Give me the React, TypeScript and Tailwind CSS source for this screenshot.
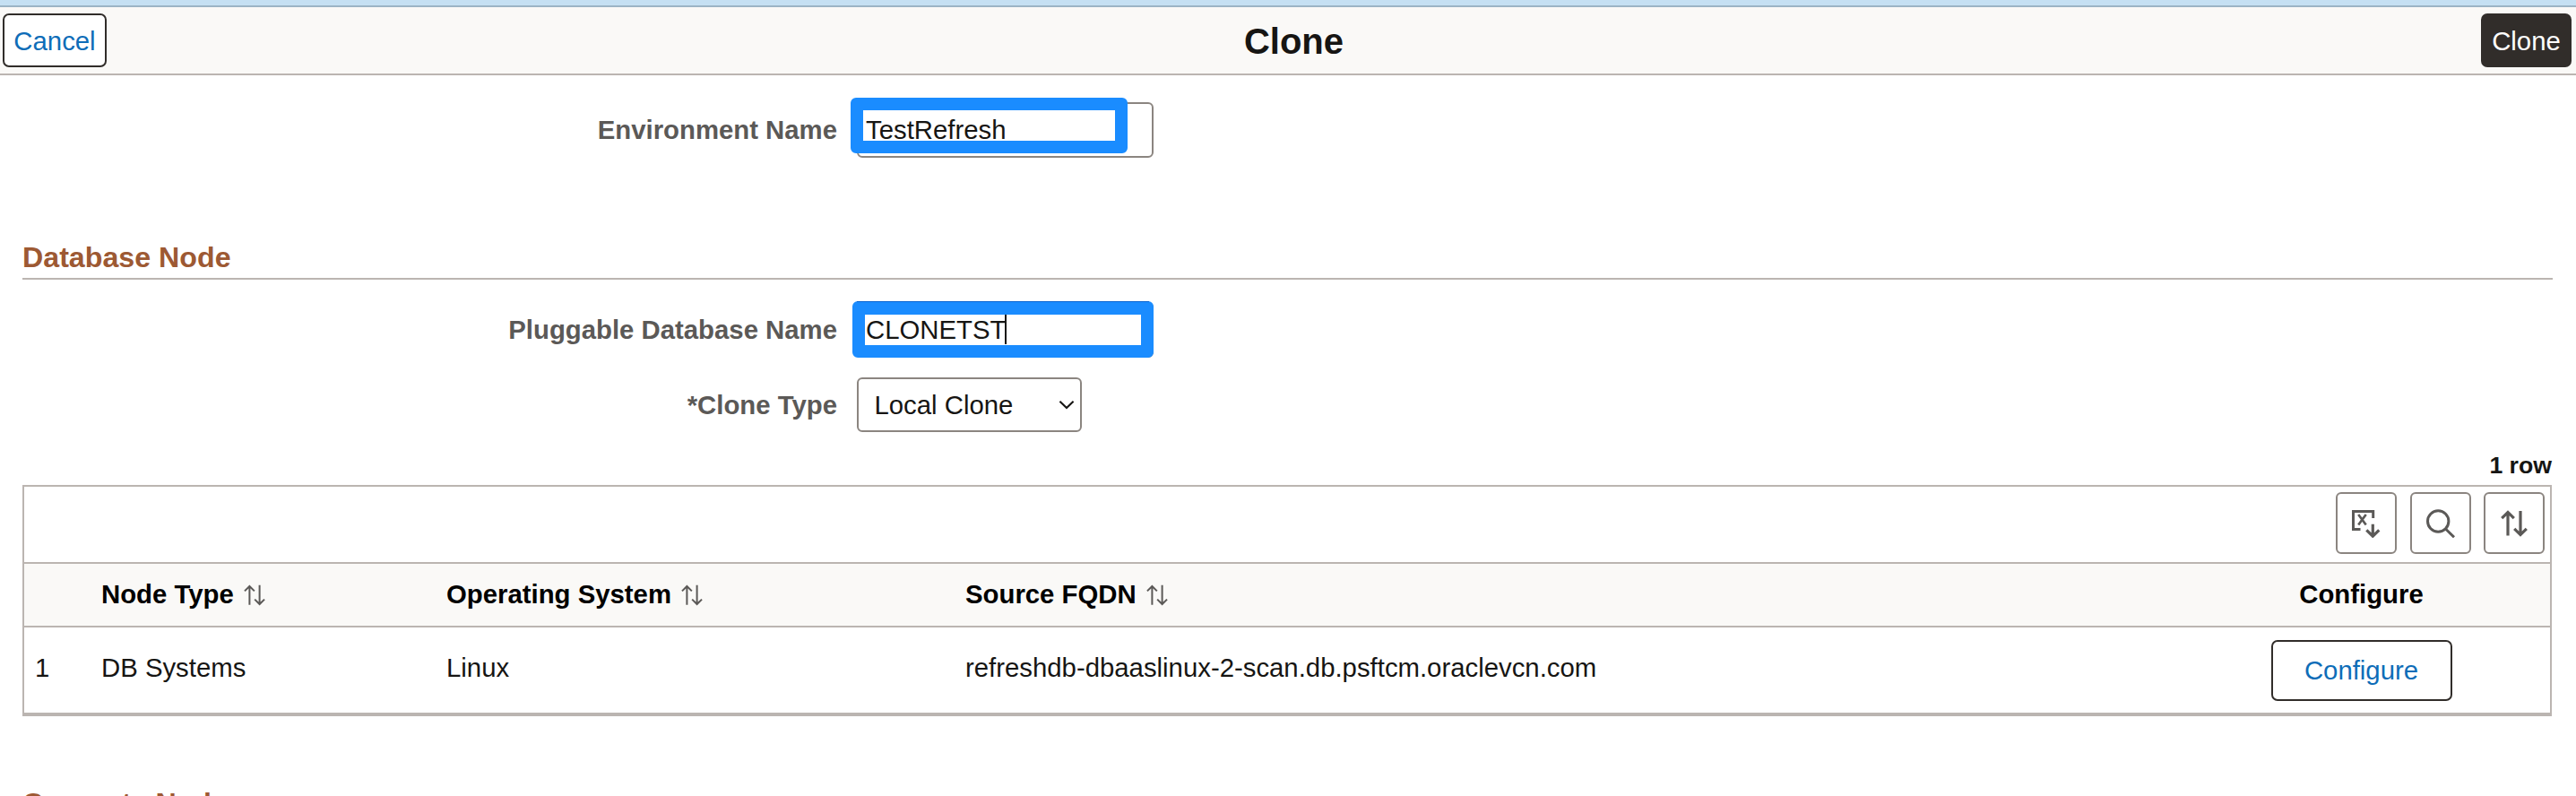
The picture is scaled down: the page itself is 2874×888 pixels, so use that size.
import React from "react";

function SortArrows({ className, stroke }: { className: string; stroke: number }) {
  return (
    <svg className={className} viewBox="0 0 30 30" fill="none" stroke="#5b5957" strokeWidth={stroke}>
      <path d="M8 28.500V2.500M1.200 9.200L8 2.400l6.800 6.800" />
      <path d="M22 1v26.500M15.200 20.800L22 27.600l6.800-6.800" />
    </svg>
  );
}

function ExportIcon() {
  return (
    <svg className="h-8 w-8" viewBox="0 0 32 32" fill="none" stroke="#5b5957">
      <path d="M9.500 22.500H1.500V2.500H23.700V10" strokeWidth="3" />
      <path d="M7.200 6L15.700 17.500M15.700 6L7.200 17.500" strokeWidth="2.700" />
      <path d="M23.300 16.800V30.500M16.300 23.300L23.300 30.200L30.300 23.300" strokeWidth="3.200" />
    </svg>
  );
}

function SearchIcon() {
  return (
    <svg className="h-8 w-8" viewBox="0 0 32 32" fill="none" stroke="#5b5957" strokeWidth="3">
      <circle cx="13.200" cy="13.500" r="11.700" />
      <path d="M21.500 22L31 31.300" />
    </svg>
  );
}

function Label({ children }: { children: React.ReactNode }) {
  return <label className="w-[934px] shrink-0 text-right font-bold text-[#5b5957]">{children}</label>;
}

function SectionTitle({ children }: { children: React.ReactNode }) {
  return (
    <h2 className="ml-[25px] h-[46px] w-[2823px] border-b-2 border-[#bbb5b1] text-[32.200px] leading-[43px] font-bold text-[#9d5933]">
      {children}
    </h2>
  );
}

function ToolButton({ label, children }: { label: string; children: React.ReactNode }) {
  return (
    <button
      aria-label={label}
      className="flex h-[69px] w-[68px] items-center justify-center rounded-[6px] border-2 border-[#8b8580] bg-white"
    >
      {children}
    </button>
  );
}

function HeaderCell({ children }: { children: React.ReactNode }) {
  return (
    <div className="flex items-center">
      <span>{children}</span>
      <SortArrows className="mt-[2px] ml-[11px] h-6 w-6" stroke={2.5} />
    </div>
  );
}

const columns = "grid grid-cols-[86px_385px_579px_1fr_419px]";

export default function App() {
  return (
    <div className="h-[888px] w-[2874px] overflow-hidden bg-white font-['Liberation_Sans',Arial,sans-serif] text-[29.333px] leading-[34px] text-[#161513]">
      <div className="h-2 border-b-2 border-[#9cb4c5] bg-[#c5e0f3]" />
      <header className="flex h-[76px] items-start justify-between border-b-2 border-[#bbb5b1] bg-[#faf9f7] pt-[7px] pr-[5px] pl-[3px]">
        <button className="h-[60px] w-[116px] rounded-[7px] border-2 border-[#312d2a] bg-white pt-px text-[#0e6db8]">
          Cancel
        </button>
        <h1 className="mt-[7px] text-[40px] leading-[48px] font-bold">Clone</h1>
        <button className="h-[60px] w-[101px] rounded-[7px] bg-[#312d2a] pt-px text-white">Clone</button>
      </header>

      <main>
        <div className="mt-[30px] flex h-[62px] items-center">
          <Label>Environment Name</Label>
          <div className="relative ml-[22px] h-[62px] w-[331px]">
            <input
              className="h-full w-full rounded-[6px] border-2 border-[#8b8580] bg-white pl-[8px] outline-none"
              defaultValue="TestRefresh"
            />
            <div className="pointer-events-none absolute -top-[5px] -left-[7px] h-[62px] w-[309px] rounded-[6px] border-x-14 border-y-[14px] border-[#1a8cff]" />
          </div>
        </div>

        <div className="mt-[90px]">
          <SectionTitle>Database Node</SectionTitle>
        </div>

        <div className="mt-[25px] flex h-[62px] items-center">
          <Label>Pluggable Database Name</Label>
          <div className="relative ml-[22px] h-[62px] w-[331px]">
            <input
              className="h-full w-full rounded-[6px] border-2 border-[#8b8580] bg-white pl-[8px] outline-none"
              defaultValue="CLONETST"
            />
            <div className="pointer-events-none absolute -top-px -left-[5px] h-[63px] w-[336px] rounded-[6px] border-x-14 border-t-[15px] border-b-14 border-[#1a8cff]" />
            <div className="absolute -top-px left-0 h-px w-[326px] bg-[#0764d2]" />
            <div className="absolute top-[14px] left-[165px] h-[33px] w-[2px] bg-[#161513]" />
          </div>
        </div>

        <div className="mt-[22px] flex h-[61px] items-center">
          <Label>*Clone Type</Label>
          <div className="ml-[22px] flex h-[61px] w-[251px] items-center justify-between rounded-[6px] border-2 border-[#8b8580] bg-white pr-[6px] pl-[17.500px]">
            <span>Local Clone</span>
            <svg className="h-[11px] w-[18px]" viewBox="0 0 19 11" fill="none" stroke="#161513" strokeWidth="2.200">
              <path d="M1.500 1.500L9.500 9.300L17.500 1.500" />
            </svg>
          </div>
        </div>

        <div className="mt-[20px] mr-[27px] h-[39px] text-right text-[26.667px] leading-[34px] font-bold">1 row</div>

        <section className="ml-[25px] w-[2822px] border-2 border-b-4 border-[#bbb5b1]">
          <div className="flex h-[86px] justify-end gap-x-[14.500px] border-b-2 border-[#bbb5b1] pt-[6px] pr-[6px]">
            <ToolButton label="Download">
              <ExportIcon />
            </ToolButton>
            <ToolButton label="Find">
              <SearchIcon />
            </ToolButton>
            <ToolButton label="Sort">
              <SortArrows className="h-[30px] w-[30px]" stroke={3.2} />
            </ToolButton>
          </div>
          <div className={`${columns} h-[71px] items-center border-b-2 border-[#bbb5b1] bg-[#faf9f7] pb-[2px] font-bold text-black`}>
            <div />
            <HeaderCell>Node Type</HeaderCell>
            <HeaderCell>Operating System</HeaderCell>
            <HeaderCell>Source FQDN</HeaderCell>
            <div className="pr-[2px] text-center">Configure</div>
          </div>
          <div className={`${columns} h-[95px] pt-[14px]`}>
            <div className="pt-[14px] pl-[12px]">1</div>
            <div className="pt-[14px]">DB Systems</div>
            <div className="pt-[14px]">Linux</div>
            <div className="pt-[14px]">refreshdb-dbaaslinux-2-scan.db.psftcm.oraclevcn.com</div>
            <div className="flex justify-center pr-[2px]">
              <button className="h-[68px] w-[202px] rounded-[7px] border-2 border-[#312d2a] bg-white text-[#0e6db8]">
                Configure
              </button>
            </div>
          </div>
        </section>

        <div className="mt-[76px]">
          <SectionTitle>Compute Node</SectionTitle>
        </div>
      </main>
    </div>
  );
}
